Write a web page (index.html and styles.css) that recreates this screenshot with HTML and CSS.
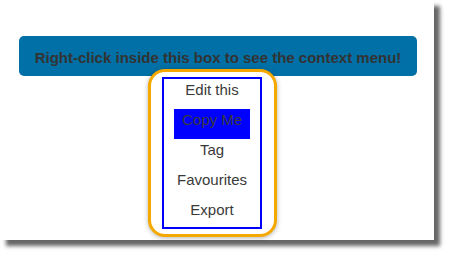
FILE: index.html
```html
<!DOCTYPE html>
<html>
<head>
<meta charset="utf-8">
<link rel="stylesheet" href="styles.css">
</head>
<body>
<div class="page">
  <div class="bar">Right-click inside this box to see the context menu!</div>
  <div class="menu-frame">
    <ul class="menu">
      <li class="item">Edit this</li>
      <li class="item active">Copy Me</li>
      <li class="item">Tag</li>
      <li class="item">Favourites</li>
      <li class="item last">Export</li>
    </ul>
  </div>
</div>
</body>
</html>
```
FILE: styles.css
```css
html, body {
  margin: 0;
  padding: 0;
  background: #ffffff;
}
body {
  height: 256px;
  font-family: "Liberation Sans", Arial, sans-serif;
  font-size: 15px;
  color: #333333;
}
.page {
  position: relative;
  width: 434px;
  height: 240px;
  box-sizing: border-box;
  padding: 36px 0 0 19px;
  background: #ffffff;
  box-shadow: 6px 6px 4px rgba(0, 0, 0, 0.6);
}
.bar {
  width: 398px;
  height: 40px;
  box-sizing: border-box;
  padding-top: 13px;
  background: #0070a6;
  border-radius: 5px;
  text-align: center;
  font-weight: bold;
  font-size: 15px;
  color: #333333;
}
.menu-frame {
  position: absolute;
  left: 148px;
  top: 69px;
  border: 3px solid #f5a800;
  border-radius: 17px;
  padding: 5px 12px 5px 11px;
  background: #ffffff;
  box-shadow: 0 1px 5px rgba(0, 0, 0, 0.3);
}
.menu {
  list-style: none;
  margin: 0;
  padding: 0;
  width: 96px;
  border: 2px solid #0000ff;
  background: #ffffff;
}
.item {
  height: 30px;
  line-height: 21px;
  text-align: center;
  margin: 0 10px;
  color: #3a3a3a;
}
.item.active {
  background: #0000ff;
}
.item.last {
  height: 28px;
}
```
